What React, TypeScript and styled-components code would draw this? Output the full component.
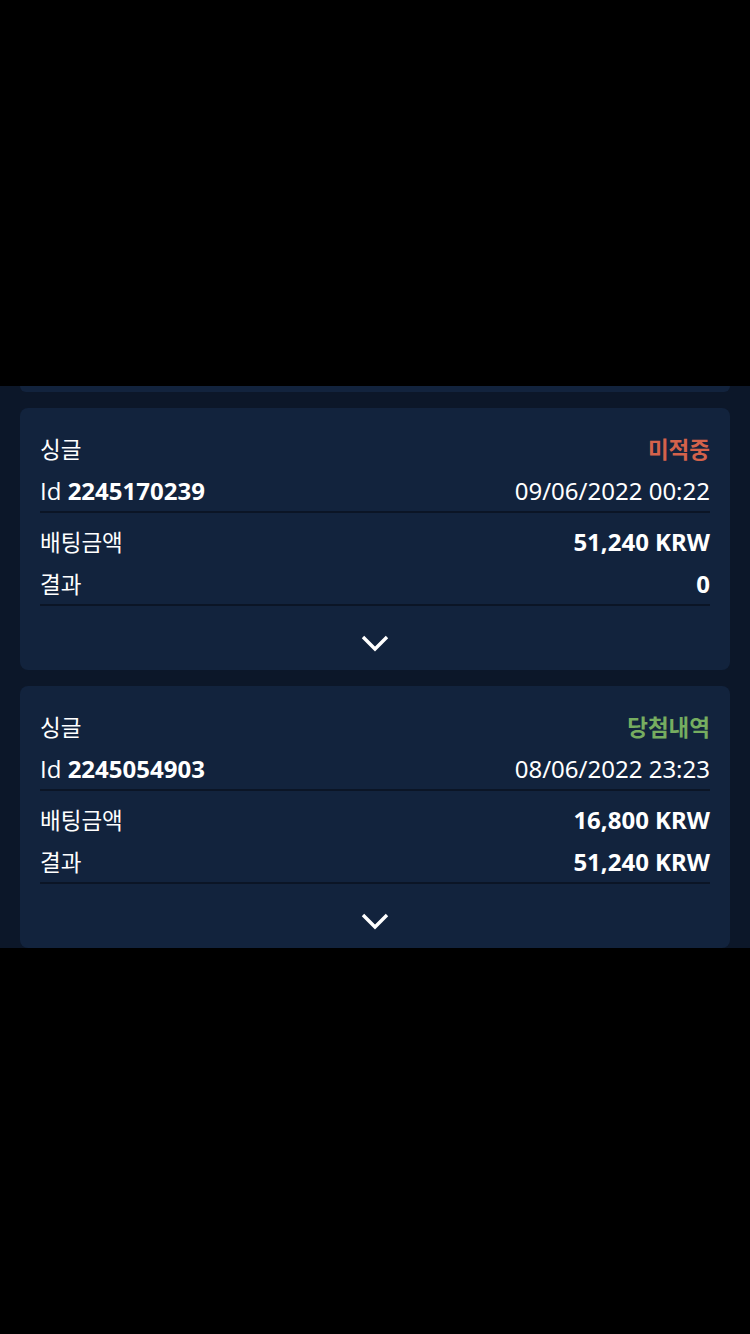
import styled, { createGlobalStyle } from "styled-components";

type Bet = {
  type: string;
  status: string;
  win: boolean;
  id: string;
  date: string;
  stake: string;
  result: string;
};

const bets: Bet[] = [
  {
    type: "싱글",
    status: "미적중",
    win: false,
    id: "2245170239",
    date: "09/06/2022 00:22",
    stake: "51,240 KRW",
    result: "0",
  },
  {
    type: "싱글",
    status: "당첨내역",
    win: true,
    id: "2245054903",
    date: "08/06/2022 23:23",
    stake: "16,800 KRW",
    result: "51,240 KRW",
  },
];

const Chevron = () => (
  <svg width="30" height="19" viewBox="0 0 30 19" fill="none">
    <polyline
      points="3,3 15,15 27,3"
      stroke="#ffffff"
      strokeWidth="3.4"
      strokeLinejoin="miter"
    />
  </svg>
);

const BetCard = ({ bet }: { bet: Bet }) => (
  <Card>
    <Section>
      <Row>
        <Kor>{bet.type}</Kor>
        <Status $win={bet.win}>{bet.status}</Status>
      </Row>
      <Row>
        <Label>
          <IdTag>Id</IdTag> <Strong>{bet.id}</Strong>
        </Label>
        <Label>{bet.date}</Label>
      </Row>
    </Section>
    <Section $gap>
      <Row>
        <Kor>배팅금액</Kor>
        <Strong>{bet.stake}</Strong>
      </Row>
      <Row>
        <Kor>결과</Kor>
        <Strong>{bet.result}</Strong>
      </Row>
    </Section>
    <Footer>
      <Chevron />
    </Footer>
  </Card>
);

const App = () => {
  return (
    <>
      <GlobalStyle />
      <Screen>
        <TopBlank />
        <Viewport>
          <List>
            <CardTail />
            {bets.map((b) => (
              <BetCard key={b.id} bet={b} />
            ))}
          </List>
        </Viewport>
        <BottomBlank />
      </Screen>
    </>
  );
};

const GlobalStyle = createGlobalStyle`
  html, body {
    margin: 0;
    padding: 0;
    background: #000;
  }
  * {
    box-sizing: border-box;
  }
`;

const Screen = styled.div`
  width: 750px;
  height: 1334px;
  display: flex;
  flex-direction: column;
  background: #000;
  font-family: "Noto Sans", "Noto Sans CJK KR", sans-serif;
  color: #fff;
`;

const TopBlank = styled.div`
  height: 386px;
  flex-shrink: 0;
`;

const BottomBlank = styled.div`
  flex: 1;
`;

const Viewport = styled.div`
  height: 562px;
  flex-shrink: 0;
  overflow: hidden;
  background: #0c1729;
  padding: 0 20px;
`;

const List = styled.div`
  display: flex;
  flex-direction: column;
  gap: 16px;
`;

const CardTail = styled.div`
  height: 6px;
  background: #12233d;
  border-radius: 0 0 8px 8px;
`;

const Card = styled.div`
  background: #12233d;
  border-radius: 8px;
  padding: 19px 20px 0;
`;

const Section = styled.div<{ $gap?: boolean }>`
  padding-top: ${(p) => (p.$gap ? "7px" : "0")};
  border-bottom: 2px solid #0b1526;
`;

const Row = styled.div`
  height: 42px;
  display: flex;
  align-items: center;
  justify-content: space-between;
  font-size: 24px;
`;

const Label = styled.span`
  font-weight: 400;
  white-space: nowrap;
`;

const IdTag = styled.span`
  font-family: "Open Sans", "Noto Sans", sans-serif;
  font-weight: 400;
`;

const Kor = styled.span`
  font-size: 22.5px;
  font-weight: 400;
  white-space: nowrap;
`;

const Strong = styled.span`
  font-weight: 700;
`;

const Status = styled.span<{ $win: boolean }>`
  font-size: 22.5px;
  font-weight: 700;
  color: ${(p) => (p.$win ? "#76ad60" : "#d4624b")};
`;

const Footer = styled.div`
  height: 64px;
  display: flex;
  justify-content: center;
  padding-top: 28px;
`;

export default App;
